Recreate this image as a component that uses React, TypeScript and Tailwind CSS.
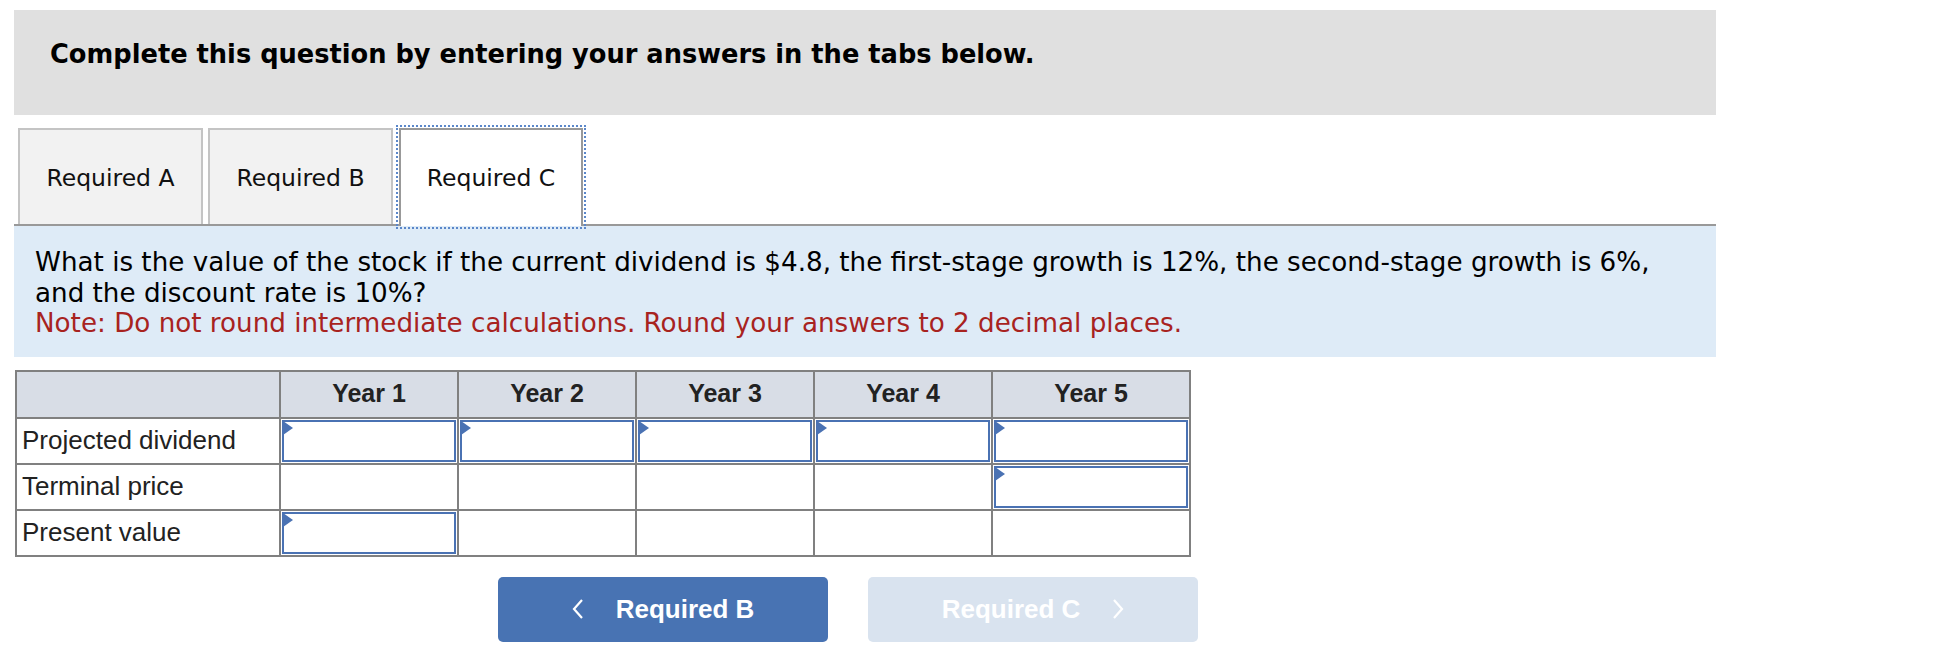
import React from 'react';

const verdana = { fontFamily: '"DejaVu Sans", Verdana, sans-serif' };

const Marker: React.FC = () => (
  <svg className="absolute left-[-1px] top-[-1px]" width="11" height="15" viewBox="0 0 11 15">
    <polygon points="0,0 10,7 0,14" fill="#4a72b3" />
  </svg>
);

const InputCell: React.FC = () => (
  <div className="relative h-full w-full border-[2.5px] border-[#4a72b3] bg-white">
    <Marker />
  </div>
);

const rows = [
  { label: 'Projected dividend', inputs: [true, true, true, true, true] },
  { label: 'Terminal price', inputs: [false, false, false, false, true] },
  { label: 'Present value', inputs: [true, false, false, false, false] },
];

const years = ['Year 1', 'Year 2', 'Year 3', 'Year 4', 'Year 5'];

const App: React.FC = () => {
  return (
    <div className="min-h-[654px] w-full bg-white">
      <div className="w-[1702px] ml-[14px] pt-[10px]">
        {/* Header */}
        <div className="h-[105px] bg-[#e0e0e0] pl-[36px] pt-[29px]" style={verdana}>
          <h1 className="text-[25.7px] leading-[30px] font-bold text-black">
            Complete this question by entering your answers in the tabs below.
          </h1>
        </div>

        {/* Tabs */}
        <div className="mt-[13px] flex gap-[5px] pl-[4px] border-b-2 border-[#999999]" style={verdana}>
          <div className="h-[96px] w-[185px] flex items-center justify-center pt-[4px] bg-[#f2f2f2] border-2 border-b-0 border-[#c4c4c4] text-[23.5px] text-[#111]">
            Required A
          </div>
          <div className="h-[96px] w-[185px] flex items-center justify-center pt-[4px] bg-[#f2f2f2] border-2 border-b-0 border-[#c4c4c4] text-[23.5px] text-[#111]">
            Required B
          </div>
          <div className="relative z-10 -mb-[2px] ml-[1px] h-[98px] w-[184px] flex items-center justify-center pt-[2px] bg-white border-2 border-b-0 border-[#999999] text-[23.5px] text-[#111] outline-2 outline-dotted outline-[#5b87c9] outline-offset-[1px]">
            Required C
          </div>
        </div>

        {/* Question */}
        <div className="bg-[#deebf7] pl-[21px] pt-[21px] pb-[18px] text-[26.2px] leading-[30.5px]" style={verdana}>
          <p className="text-black">
            What is the value of the stock if the current dividend is $4.8, the first-stage growth is 12%, the second-stage growth is 6%,
            <br />
            and the discount rate is 10%?
          </p>
          <p className="text-[#a8231f]">
            Note: Do not round intermediate calculations. Round your answers to 2 decimal places.
          </p>
        </div>

        {/* Table */}
        <table
          className="mt-[13px] ml-[1px] border-collapse border-2 border-[#808080] text-[#222]"
          style={{ fontFamily: '"Liberation Sans", Arial, sans-serif' }}
        >
          <thead>
            <tr className="h-[47px] bg-[#d8dde6] text-[25px]">
              <th className="w-[264px] border-2 border-[#808080]" />
              {years.map((y, i) => (
                <th
                  key={y}
                  className={`${i === 4 ? 'w-[198px]' : 'w-[178px]'} border-2 border-[#808080] font-bold text-center`}
                >
                  {y}
                </th>
              ))}
            </tr>
          </thead>
          <tbody>
            {rows.map((r) => (
              <tr key={r.label} className="h-[46px] text-[26px]">
                <td className="border-2 border-[#808080] pl-[5px] text-left whitespace-nowrap">{r.label}</td>
                {r.inputs.map((inp, i) => (
                  <td key={i} className="border-2 border-[#808080] p-0 h-[46px]">
                    {inp ? (
                      <div className="h-[44px] p-[1px]">
                        <InputCell />
                      </div>
                    ) : null}
                  </td>
                ))}
              </tr>
            ))}
          </tbody>
        </table>

        {/* Nav buttons */}
        <div
          className="mt-[20px] ml-[484px] flex gap-[40px]"
          style={{ fontFamily: '"Liberation Sans", Arial, sans-serif' }}
        >
          <button className="h-[65px] w-[330px] rounded-[5px] bg-[#4873b3] text-white flex items-center justify-center gap-[32px] text-[26px] font-bold">
            <svg width="12" height="22" viewBox="0 0 12 22" fill="none">
              <polyline points="10,2 2,11 10,20" stroke="white" strokeWidth="2.2" />
            </svg>
            <span>Required B</span>
          </button>
          <button
            disabled
            className="h-[65px] w-[330px] rounded-[5px] bg-[#d9e3ef] text-white flex items-center justify-center gap-[32px] text-[26px] font-bold"
          >
            <span>Required C</span>
            <svg width="12" height="22" viewBox="0 0 12 22" fill="none">
              <polyline points="2,2 10,11 2,20" stroke="white" strokeWidth="2.2" />
            </svg>
          </button>
        </div>
      </div>
    </div>
  );
};

export default App;
